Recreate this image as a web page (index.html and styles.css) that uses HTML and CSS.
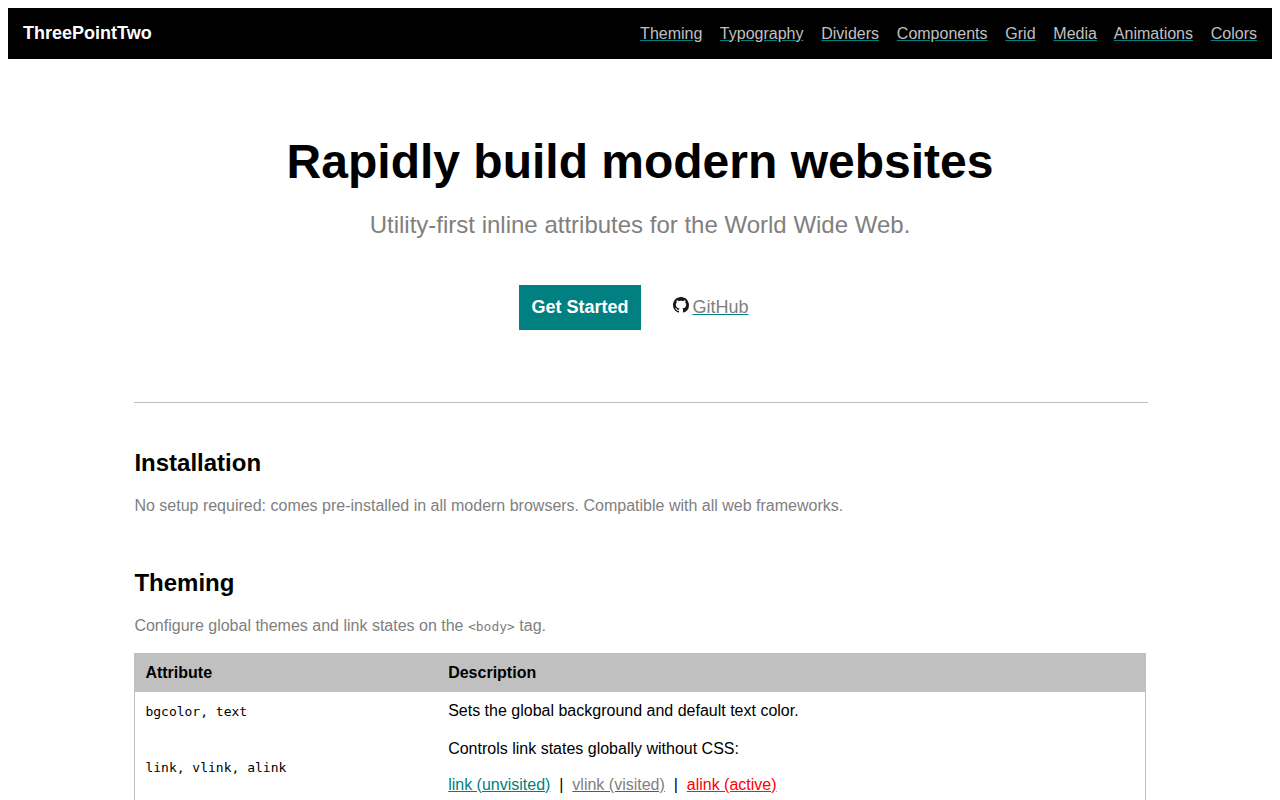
FILE: index.html
```html
<!DOCTYPE html>
<html lang="en">
<head>
    <meta charset="UTF-8">
    <meta name="viewport" content="width=device-width, initial-scale=1.0">
    <title>ThreePointTwo</title>
    <link rel="stylesheet" href="styles.css">
</head>
<body>
    <header class="navbar">
        <strong class="brand">ThreePointTwo</strong>
        <nav>
            <a href="#theming">Theming</a>&nbsp; &nbsp;
            <a href="#typography">Typography</a>&nbsp; &nbsp;
            <a href="#dividers">Dividers</a>&nbsp; &nbsp;
            <a href="#components">Components</a>&nbsp; &nbsp;
            <a href="#grid">Grid</a>&nbsp; &nbsp;
            <a href="#media">Media</a>&nbsp; &nbsp;
            <a href="#animations">Animations</a>&nbsp; &nbsp;
            <a href="#colors">Colors</a>
        </nav>
    </header>

    <div class="hero">
        <h1>Rapidly build modern websites</h1>
        <p class="tagline">Utility-first inline attributes for the World Wide Web.</p>
        <div class="actions">
            <a class="button" href="#installation">Get Started</a>
            <div class="github">
                <svg width="16" height="16" viewBox="0 0 16 16" aria-hidden="true">
                    <path fill="#191717" d="M8 0C3.58 0 0 3.58 0 8c0 3.54 2.29 6.53 5.47 7.59.4.07.55-.17.55-.38 0-.19-.01-.82-.01-1.49-2.01.37-2.53-.49-2.69-.94-.09-.23-.48-.94-.82-1.13-.28-.15-.68-.52-.01-.53.63-.01 1.08.58 1.23.82.72 1.21 1.87.87 2.33.66.07-.52.28-.87.51-1.07-1.78-.2-3.64-.89-3.64-3.95 0-.87.31-1.59.82-2.15-.08-.2-.36-1.02.08-2.12 0 0 .67-.21 2.2.82.64-.18 1.32-.27 2-.27s1.36.09 2 .27c1.53-1.04 2.2-.82 2.2-.82.44 1.1.16 1.92.08 2.12.51.56.82 1.27.82 2.15 0 3.07-1.87 3.75-3.65 3.95.29.25.54.73.54 1.48 0 1.07-.01 1.93-.01 2.2 0 .21.15.46.55.38A8.01 8.01 0 0 0 16 8c0-4.42-3.58-8-8-8z"/>
                </svg>
                <a href="#github">GitHub</a>
            </div>
        </div>
    </div>

    <main class="content">
        <hr>

        <section id="installation">
            <h2>Installation</h2>
            <p>No setup required: comes pre-installed in all modern browsers. Compatible with all web frameworks.</p>
        </section>

        <section id="theming">
            <h2>Theming</h2>
            <p>Configure global themes and link states on the <code>&lt;body&gt;</code> tag.</p>
            <table>
                <thead>
                    <tr>
                        <th class="attribute">Attribute</th>
                        <th>Description</th>
                    </tr>
                </thead>
                <tbody>
                    <tr>
                        <td><code>bgcolor, text</code></td>
                        <td>Sets the global background and default text color.</td>
                    </tr>
                    <tr>
                        <td><code>link, vlink, alink</code></td>
                        <td>
                            Controls link states globally without CSS:
                            <div class="states">
                                <a class="link" href="#link">link (unvisited)</a> &nbsp;|&nbsp;
                                <a class="vlink" href="#vlink">vlink (visited)</a> &nbsp;|&nbsp;
                                <a class="alink" href="#alink">alink (active)</a>
                            </div>
                        </td>
                    </tr>
                </tbody>
            </table>
        </section>
    </main>
</body>
</html>
```

FILE: styles.css
```css
body {
    margin: 8px;
    font-family: "Liberation Sans", Arial, sans-serif;
    font-size: 16px;
    line-height: 18px;
    color: black;
    background-color: white;
}

h1, h2, p {
    margin: 0;
}

a {
    color: gray;
    text-decoration-color: teal;
}

code {
    font-family: "DejaVu Sans Mono", monospace;
    font-size: 13px;
    line-height: 14px;
}

.navbar {
    display: flex;
    align-items: center;
    justify-content: space-between;
    padding: 15px;
    background-color: black;
}

.brand {
    font-size: 18px;
    line-height: 21px;
    color: white;
}

.navbar a {
    color: silver;
}

.hero {
    padding: 75px 0 72px;
    text-align: center;
}

h1 {
    font-size: 48px;
    line-height: 55px;
}

.tagline {
    margin: 22px 0 46px;
    font-size: 24px;
    line-height: 28px;
    color: gray;
}

.actions {
    display: flex;
    justify-content: center;
    gap: 20px;
    font-size: 18px;
    line-height: 21px;
}

.button {
    padding: 12px;
    font-weight: bold;
    color: white;
    background-color: teal;
    text-decoration: none;
}

.github {
    display: flex;
    align-items: flex-start;
    gap: 4px;
    padding: 12px;
}

.content {
    width: 80%;
    margin: 0 auto;
}

hr {
    width: 100%;
    margin: 0;
    border: 1px solid silver;
    border-bottom: none;
}

section {
    padding-top: 46px;
}

section + section {
    padding-top: 54px;
}

h2 {
    margin-bottom: 20px;
    font-size: 24px;
    line-height: 28px;
}

section p {
    color: gray;
}

table {
    width: 100%;
    margin-top: 18px;
    border: 1px solid silver;
    border-spacing: 0;
}

th,
td {
    padding: 10px;
    text-align: left;
}

th {
    background-color: silver;
}

.attribute {
    box-sizing: border-box;
    width: 30%;
}

.states {
    margin-top: 18px;
}

.link {
    color: teal;
}

.alink {
    color: red;
}
```
